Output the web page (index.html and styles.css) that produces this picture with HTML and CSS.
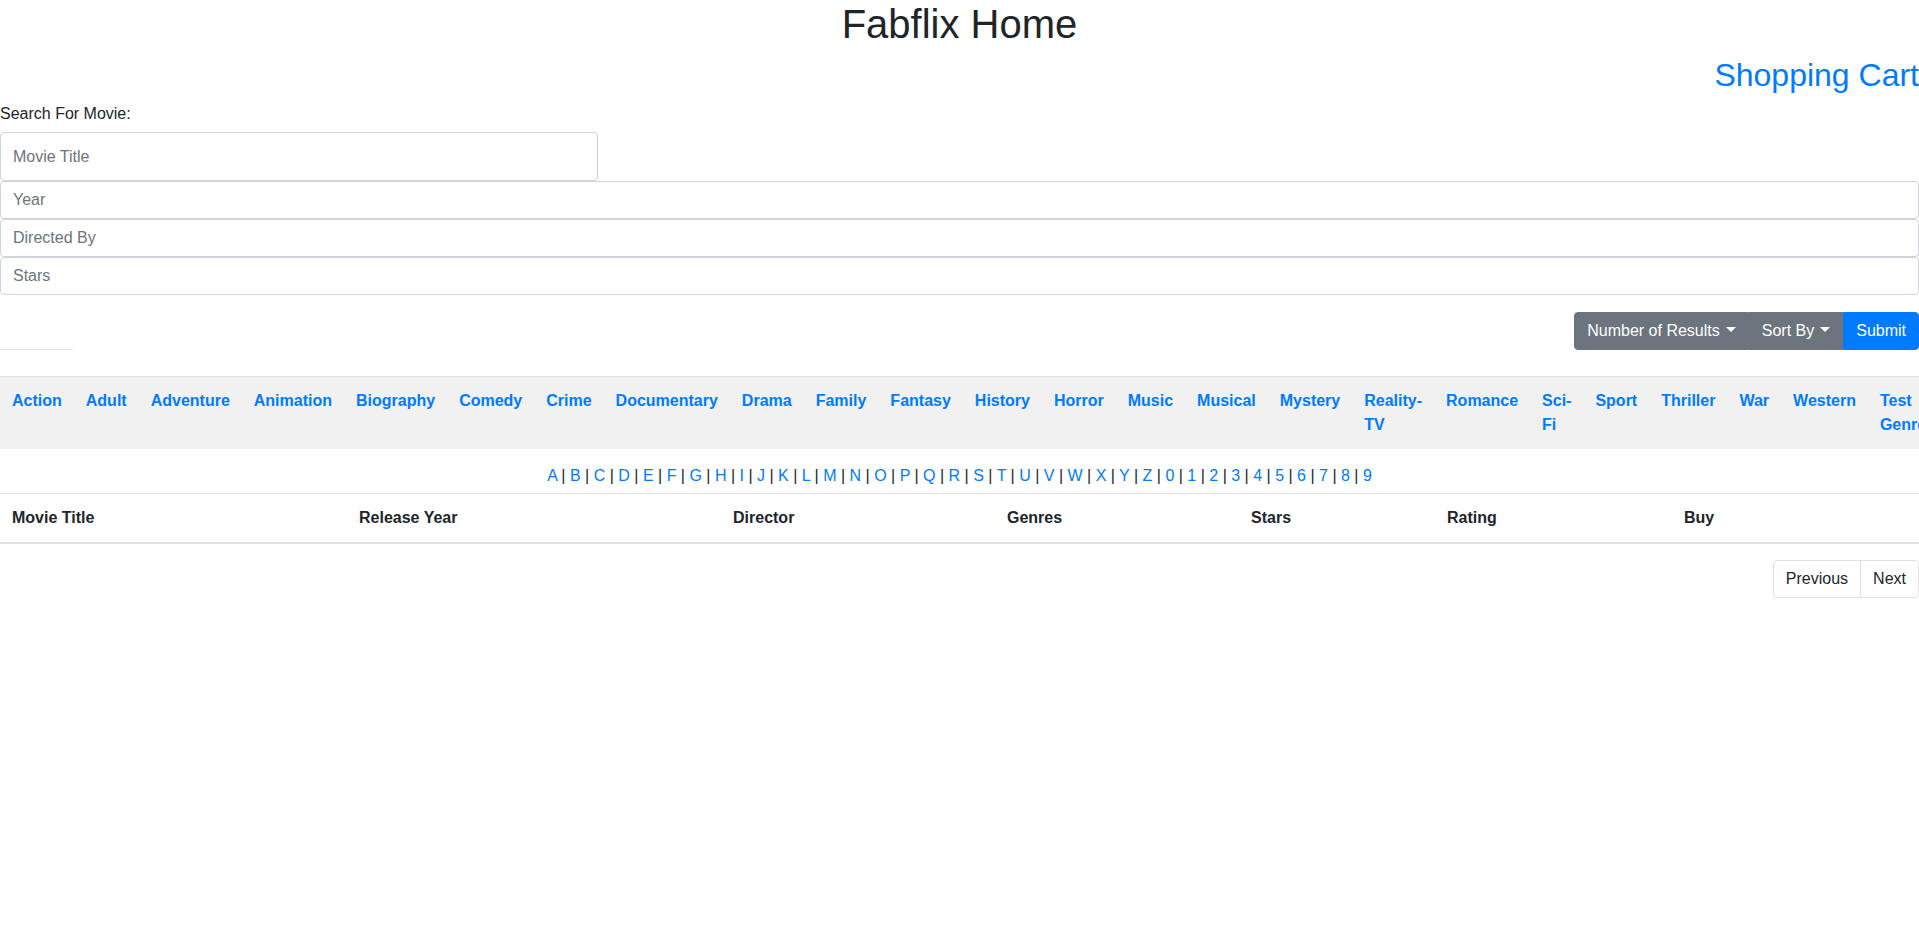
FILE: index.html
```html
<!DOCTYPE html>
<html lang="en">
<head>
<meta charset="utf-8">
<title>Fabflix Home</title>
<link rel="stylesheet" href="styles.css">
</head>
<body>
<h1 class="title">Fabflix Home</h1>
<h2 class="cart"><a href="#" class="cart-link">Shopping Cart</a></h2>

<form class="search">
  <label class="search-label">Search For Movie:</label>
  <input class="form-control input-title" type="text" placeholder="Movie Title">
  <input class="form-control" type="text" placeholder="Year">
  <input class="form-control" type="text" placeholder="Directed By">
  <input class="form-control" type="text" placeholder="Stars">
  <div class="actions">
    <div class="stub"></div>
    <div class="btn-group">
      <button type="button" class="btn btn-secondary first">Number of Results<span class="caret"></span></button>
      <button type="button" class="btn btn-secondary">Sort By<span class="caret"></span></button>
      <button type="submit" class="btn btn-primary last">Submit</button>
    </div>
  </div>
</form>

<div class="genres">
  <a href="#" class="genre">Action</a>
  <a href="#" class="genre">Adult</a>
  <a href="#" class="genre">Adventure</a>
  <a href="#" class="genre">Animation</a>
  <a href="#" class="genre">Biography</a>
  <a href="#" class="genre">Comedy</a>
  <a href="#" class="genre">Crime</a>
  <a href="#" class="genre">Documentary</a>
  <a href="#" class="genre">Drama</a>
  <a href="#" class="genre">Family</a>
  <a href="#" class="genre">Fantasy</a>
  <a href="#" class="genre">History</a>
  <a href="#" class="genre">Horror</a>
  <a href="#" class="genre">Music</a>
  <a href="#" class="genre">Musical</a>
  <a href="#" class="genre">Mystery</a>
  <a href="#" class="genre">Reality-TV</a>
  <a href="#" class="genre">Romance</a>
  <a href="#" class="genre">Sci-Fi</a>
  <a href="#" class="genre">Sport</a>
  <a href="#" class="genre">Thriller</a>
  <a href="#" class="genre">War</a>
  <a href="#" class="genre">Western</a>
  <a href="#" class="genre">Test Genre</a>
</div>

<div class="alpha">
<a href="#">A</a> | <a href="#">B</a> | <a href="#">C</a> | <a href="#">D</a> | <a href="#">E</a> | <a href="#">F</a> | <a href="#">G</a> | <a href="#">H</a> | <a href="#">I</a> | <a href="#">J</a> | <a href="#">K</a> | <a href="#">L</a> | <a href="#">M</a> | <a href="#">N</a> | <a href="#">O</a> | <a href="#">P</a> | <a href="#">Q</a> | <a href="#">R</a> | <a href="#">S</a> | <a href="#">T</a> | <a href="#">U</a> | <a href="#">V</a> | <a href="#">W</a> | <a href="#">X</a> | <a href="#">Y</a> | <a href="#">Z</a> | <a href="#">0</a> | <a href="#">1</a> | <a href="#">2</a> | <a href="#">3</a> | <a href="#">4</a> | <a href="#">5</a> | <a href="#">6</a> | <a href="#">7</a> | <a href="#">8</a> | <a href="#">9</a>
</div>

<table class="movies">
  <thead>
    <tr>
      <th class="c-title">Movie Title</th>
      <th class="c-year">Release Year</th>
      <th class="c-dir">Director</th>
      <th class="c-gen">Genres</th>
      <th class="c-stars">Stars</th>
      <th class="c-rating">Rating</th>
      <th class="c-buy">Buy</th>
    </tr>
  </thead>
  <tbody></tbody>
</table>

<nav class="pager">
  <a href="#" class="page-link prev">Previous</a>
  <a href="#" class="page-link next">Next</a>
</nav>
</body>
</html>
```

FILE: styles.css
```css
html {
  overflow-x: hidden;
}
body {
  margin: 0;
  font-family: "Liberation Sans", Arial, sans-serif;
  font-size: 16px;
  line-height: 1.5;
  color: #212529;
  background: #fff;
}
a {
  color: #007bff;
  text-decoration: none;
}
.title {
  margin: 0 0 8px;
  font-size: 40px;
  font-weight: 400;
  line-height: 48px;
  text-align: center;
}
.cart {
  margin: 0 0 8px;
  font-size: 32px;
  font-weight: 400;
  line-height: 38.4px;
  text-align: right;
}
.search {
  display: flex;
  flex-direction: column;
}
.search-label {
  display: block;
  margin: 0 0 6px;
  line-height: 24px;
}
.form-control {
  display: block;
  box-sizing: border-box;
  width: 100%;
  height: 38px;
  margin: 0;
  padding: 6px 12px;
  font-family: inherit;
  font-size: 16px;
  line-height: 24px;
  color: #495057;
  background: #fff;
  border: 1px solid #ced4da;
  border-radius: 4px;
}
.form-control::placeholder {
  color: #6c757d;
}
.input-title {
  width: 598px;
  height: 49px;
}
.actions {
  display: flex;
  justify-content: space-between;
  align-items: flex-end;
  margin-top: 17px;
}
.stub {
  width: 73px;
  height: 1px;
  background: #e3e3e3;
}
.btn-group {
  display: flex;
}
.btn {
  box-sizing: border-box;
  height: 38px;
  padding: 6px 12px;
  font-family: inherit;
  font-size: 16px;
  line-height: 24px;
  color: #fff;
  border: 1px solid transparent;
  border-radius: 0;
  cursor: pointer;
}
.btn-secondary {
  background: #6c757d;
  border-color: #6c757d;
}
.btn-primary {
  background: #007bff;
  border-color: #007bff;
}
.first {
  border-radius: 4px 0 0 4px;
}
.last {
  border-radius: 0 4px 4px 0;
}
.caret {
  display: inline-block;
  margin-left: 6px;
  vertical-align: 4px;
  border-top: 5px solid #fff;
  border-left: 5px solid transparent;
  border-right: 5px solid transparent;
}
.genres {
  display: flex;
  margin-top: 26px;
  background: #f1f1f1;
  border-top: 1px solid #dee2e6;
  overflow: hidden;
}
.genre {
  flex: 0 0 auto;
  width: min-content;
  padding: 12px;
  font-weight: 700;
  line-height: 24px;
}
.alpha {
  padding: 15px 0 5px;
  line-height: 24px;
  text-align: center;
  color: #212529;
}
.movies {
  width: 100%;
  border-collapse: collapse;
  margin-bottom: 16px;
  table-layout: fixed;
}
.movies th {
  padding: 12px;
  text-align: left;
  font-weight: 700;
  line-height: 24px;
  border-top: 1px solid #dee2e6;
  border-bottom: 2px solid #dee2e6;
  vertical-align: bottom;
}
.c-title { width: 323px; }
.c-year { width: 350px; }
.c-dir { width: 250px; }
.c-gen { width: 220px; }
.c-stars { width: 172px; }
.c-rating { width: 213px; }
.c-buy { width: 223px; }
.pager {
  display: flex;
  justify-content: flex-end;
}
.page-link {
  display: block;
  padding: 8px 12px;
  line-height: 20px;
  color: #212529;
  border: 1px solid #dee2e6;
  background: #fff;
}
.prev {
  border-radius: 4px 0 0 4px;
}
.next {
  margin-left: -1px;
  border-radius: 0 4px 4px 0;
}
```
